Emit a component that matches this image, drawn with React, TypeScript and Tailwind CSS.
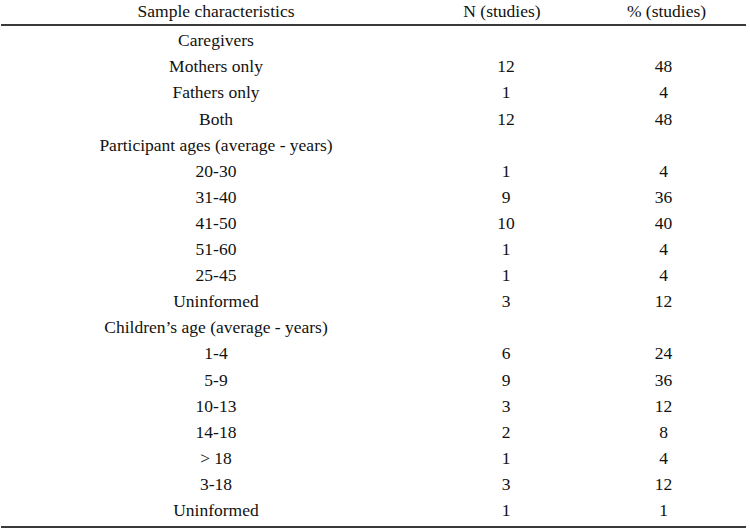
import React from 'react'

interface Row {
  label: string
  n?: string
  pct?: string
}

const rows: Row[] = [
  { label: 'Caregivers' },
  { label: 'Mothers only', n: '12', pct: '48' },
  { label: 'Fathers only', n: '1', pct: '4' },
  { label: 'Both', n: '12', pct: '48' },
  { label: 'Participant ages (average - years)' },
  { label: '20-30', n: '1', pct: '4' },
  { label: '31-40', n: '9', pct: '36' },
  { label: '41-50', n: '10', pct: '40' },
  { label: '51-60', n: '1', pct: '4' },
  { label: '25-45', n: '1', pct: '4' },
  { label: 'Uninformed', n: '3', pct: '12' },
  { label: 'Children\u2019s age (average - years)' },
  { label: '1-4', n: '6', pct: '24' },
  { label: '5-9', n: '9', pct: '36' },
  { label: '10-13', n: '3', pct: '12' },
  { label: '14-18', n: '2', pct: '8' },
  { label: '> 18', n: '1', pct: '4' },
  { label: '3-18', n: '3', pct: '12' },
  { label: 'Uninformed', n: '1', pct: '1' },
]

const App: React.FC = () => {
  return (
    <div className="w-[750px] h-[530px] bg-white text-[#111] text-[17.5px] leading-none font-[family-name:'Liberation_Serif','Times_New_Roman',serif]">
      <div className="ml-[1px] w-[745px]">
        {/* Header */}
        <div className="grid grid-cols-[430px_150px_165px] h-[26px] border-b-2 border-[#3a3a3a]">
          <div className="flex items-center justify-center pb-[1px]">Sample characteristics</div>
          <div className="flex items-center justify-center pb-[1px] pr-[8px]">N (studies)</div>
          <div className="flex items-center justify-center pb-[1px] pl-[6px]">% (studies)</div>
        </div>

        {/* Body */}
        <div className="pt-[2px] pb-[2px] border-b-2 border-[#3a3a3a]">
          {rows.map((r, i) => (
            <div key={i} className="grid grid-cols-[430px_150px_165px] h-[26.1px] items-center">
              <div className="text-center">{r.label}</div>
              <div className="text-center">{r.n}</div>
              <div className="text-center">{r.pct}</div>
            </div>
          ))}
        </div>
      </div>
    </div>
  )
}

export default App
